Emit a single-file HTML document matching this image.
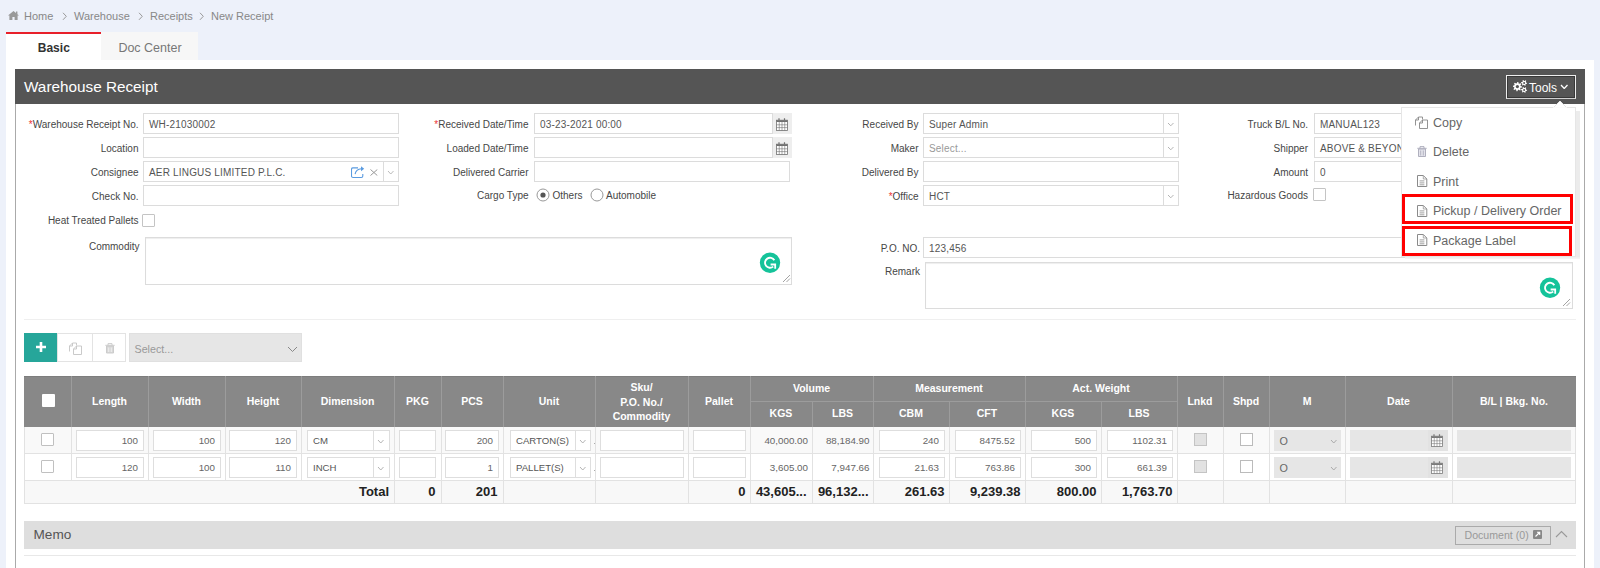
<!DOCTYPE html><html><head><meta charset="utf-8"><style>
html,body{margin:0;padding:0;width:1600px;height:568px;overflow:hidden;background:#edf1fa;font-family:"Liberation Sans", sans-serif;}
div{box-sizing:border-box;}
</style></head><body>
<svg style="position:absolute;left:8px;top:11px;" width="11" height="9" viewBox="0 0 11 9"><path d="M5.5 0 L11 4.6 L9.6 4.6 L9.6 9 L6.6 9 L6.6 6 L4.4 6 L4.4 9 L1.4 9 L1.4 4.6 L0 4.6 Z" fill="#999"/><rect x="8" y="0.5" width="1.4" height="2.5" fill="#999"/></svg>
<div style="position:absolute;left:24px;top:10.69px;font-size:11px;line-height:11px;color:#888;font-weight:400;white-space:nowrap;">Home</div>
<svg style="position:absolute;left:61.5px;top:12px;" width="6" height="9" viewBox="0 0 6 9"><path d="M1 0.8 L4.3 4.3 L1 7.8" fill="none" stroke="#999" stroke-width="1"/></svg>
<svg style="position:absolute;left:137.5px;top:12px;" width="6" height="9" viewBox="0 0 6 9"><path d="M1 0.8 L4.3 4.3 L1 7.8" fill="none" stroke="#999" stroke-width="1"/></svg>
<svg style="position:absolute;left:199px;top:12px;" width="6" height="9" viewBox="0 0 6 9"><path d="M1 0.8 L4.3 4.3 L1 7.8" fill="none" stroke="#999" stroke-width="1"/></svg>
<div style="position:absolute;left:74px;top:10.69px;font-size:11px;line-height:11px;color:#888;font-weight:400;white-space:nowrap;">Warehouse</div>
<div style="position:absolute;left:150px;top:10.69px;font-size:11px;line-height:11px;color:#888;font-weight:400;white-space:nowrap;">Receipts</div>
<div style="position:absolute;left:211px;top:10.69px;font-size:11px;line-height:11px;color:#888;font-weight:400;white-space:nowrap;">New Receipt</div>
<div style="position:absolute;left:6px;top:32px;width:95px;height:28px;background:#fff;border-top:2px solid #e8202a;"></div>
<div style="position:absolute;left:6.299999999999997px;width:95px;text-align:center;top:41.84px;font-size:12px;line-height:12px;color:#333;font-weight:700;white-space:nowrap;">Basic</div>
<div style="position:absolute;left:101px;top:32px;width:97px;height:28px;background:#f7f7f7;"></div>
<div style="position:absolute;left:101.5px;width:97px;text-align:center;top:42.42px;font-size:12.5px;line-height:12.5px;color:#777;font-weight:400;white-space:nowrap;">Doc Center</div>
<div style="position:absolute;left:6px;top:60px;width:1588px;height:508px;background:#fff;"></div>
<div style="position:absolute;left:15px;top:103px;width:1570px;height:465px;border-left:1px solid #aaa;border-right:1px solid #aaa;"></div>
<div style="position:absolute;left:15px;top:69px;width:1570px;height:35px;background:#555;"></div>
<div style="position:absolute;left:24px;top:79.05px;font-size:15.3px;line-height:15.3px;color:#fff;font-weight:400;white-space:nowrap;">Warehouse Receipt</div>
<div style="position:absolute;right:1461.5px;text-align:right;top:120.03px;font-size:10px;line-height:10px;color:#464646;font-weight:400;white-space:nowrap;"><span style="color:#e33">*</span>Warehouse Receipt No.</div>
<div style="position:absolute;left:143px;top:113px;width:256px;height:21px;background:#fff;border:1px solid #dcdcdc;"></div>
<div style="position:absolute;left:149px;top:120.03px;font-size:10px;line-height:10px;color:#555;font-weight:400;white-space:nowrap;letter-spacing:0.18px;">WH-21030002</div>
<div style="position:absolute;right:1461.5px;text-align:right;top:144.03px;font-size:10px;line-height:10px;color:#464646;font-weight:400;white-space:nowrap;">Location</div>
<div style="position:absolute;left:143px;top:137px;width:256px;height:21px;background:#fff;border:1px solid #dcdcdc;"></div>
<div style="position:absolute;right:1461.5px;text-align:right;top:168.03px;font-size:10px;line-height:10px;color:#464646;font-weight:400;white-space:nowrap;">Consignee</div>
<div style="position:absolute;left:143px;top:161px;width:256px;height:21px;background:#fff;border:1px solid #dcdcdc;"></div>
<div style="position:absolute;left:149px;top:168.03px;font-size:10px;line-height:10px;color:#555;font-weight:400;white-space:nowrap;letter-spacing:0.18px;">AER LINGUS LIMITED P.L.C.</div>
<div style="position:absolute;left:383px;top:162px;width:1px;height:19px;background:#dcdcdc;"></div>
<svg style="position:absolute;left:386.7px;top:169.8px;" width="7.5" height="5" viewBox="0 0 7.5 5"><path d="M1 1 L3.75 4 L6.5 1" fill="none" stroke="#bbb" stroke-width="1"/></svg>
<svg style="position:absolute;left:351px;top:165px;" width="14" height="14" viewBox="0 0 14 14"><path d="M7 2.9 H2 Q0.5 2.9 0.5 4.4 V11 Q0.5 12.5 2 12.5 H10.3 Q11.8 12.5 11.8 11 V9" stroke="#5a9be0" stroke-width="1.1" fill="none"/><path d="M4.1 9.2 Q4.8 4.3 10.4 3.7" stroke="#5a9be0" stroke-width="1.1" fill="none"/><path d="M10 1.2 L13.2 3.7 L10 6.2 Z" fill="#5a9be0"/></svg>
<svg style="position:absolute;left:370px;top:168.5px;" width="8" height="7" viewBox="0 0 8 7"><path d="M0.5 0.5 L7.3 6.5 M7.3 0.5 L0.5 6.5" stroke="#999" stroke-width="1"/></svg>
<div style="position:absolute;right:1461.5px;text-align:right;top:192.03px;font-size:10px;line-height:10px;color:#464646;font-weight:400;white-space:nowrap;">Check No.</div>
<div style="position:absolute;left:143px;top:185px;width:256px;height:21px;background:#fff;border:1px solid #dcdcdc;"></div>
<div style="position:absolute;right:1461.5px;text-align:right;top:216.03px;font-size:10px;line-height:10px;color:#464646;font-weight:400;white-space:nowrap;">Heat Treated Pallets</div>
<div style="position:absolute;left:142px;top:213.5px;width:13px;height:13px;background:#fff;border:1px solid #c4c4c4;border-radius:1px;"></div>
<div style="position:absolute;right:1460.5px;text-align:right;top:241.53px;font-size:10px;line-height:10px;color:#464646;font-weight:400;white-space:nowrap;">Commodity</div>
<div style="position:absolute;left:145px;top:237px;width:647px;height:48px;background:#fff;border:1px solid #dcdcdc;box-shadow:inset 0 1px 1px rgba(0,0,0,.07);"></div>
<div style="position:absolute;right:1071.5px;text-align:right;top:120.03px;font-size:10px;line-height:10px;color:#464646;font-weight:400;white-space:nowrap;"><span style="color:#e33">*</span>Received Date/Time</div>
<div style="position:absolute;left:772px;top:113px;width:20px;height:21px;background:#eee;"></div>
<div style="position:absolute;left:534px;top:113px;width:239px;height:21px;background:#fff;border:1px solid #dcdcdc;"></div>
<div style="position:absolute;left:540px;top:120.03px;font-size:10px;line-height:10px;color:#555;font-weight:400;white-space:nowrap;letter-spacing:0.18px;">03-23-2021 00:00</div>
<svg style="position:absolute;left:776px;top:117.5px;" width="12" height="13" viewBox="0 0 12 13"><path d="M3 0.3 V3 M8.5 0.3 V3" stroke="#707070" stroke-width="1.2"/><rect x="0.5" y="2.2" width="11" height="10.3" fill="#fff" stroke="#707070" stroke-width="0.8"/><rect x="0.5" y="2.2" width="11" height="1.8" fill="#707070"/><path d="M0.5 6.8 H11.5 M0.5 9.6 H11.5 M3.25 4 V12.5 M6 4 V12.5 M8.75 4 V12.5" stroke="#707070" stroke-width="0.6"/></svg>
<div style="position:absolute;right:1071.5px;text-align:right;top:144.03px;font-size:10px;line-height:10px;color:#464646;font-weight:400;white-space:nowrap;">Loaded Date/Time</div>
<div style="position:absolute;left:772px;top:137px;width:20px;height:21px;background:#eee;"></div>
<div style="position:absolute;left:534px;top:137px;width:239px;height:21px;background:#fff;border:1px solid #dcdcdc;"></div>
<svg style="position:absolute;left:776px;top:141.5px;" width="12" height="13" viewBox="0 0 12 13"><path d="M3 0.3 V3 M8.5 0.3 V3" stroke="#707070" stroke-width="1.2"/><rect x="0.5" y="2.2" width="11" height="10.3" fill="#fff" stroke="#707070" stroke-width="0.8"/><rect x="0.5" y="2.2" width="11" height="1.8" fill="#707070"/><path d="M0.5 6.8 H11.5 M0.5 9.6 H11.5 M3.25 4 V12.5 M6 4 V12.5 M8.75 4 V12.5" stroke="#707070" stroke-width="0.6"/></svg>
<div style="position:absolute;right:1071.5px;text-align:right;top:168.03px;font-size:10px;line-height:10px;color:#464646;font-weight:400;white-space:nowrap;">Delivered Carrier</div>
<div style="position:absolute;left:534px;top:161px;width:256px;height:21px;background:#fff;border:1px solid #dcdcdc;"></div>
<div style="position:absolute;right:1071.5px;text-align:right;top:190.53px;font-size:10px;line-height:10px;color:#464646;font-weight:400;white-space:nowrap;">Cargo Type</div>
<svg style="position:absolute;left:536px;top:188px;" width="14" height="14" viewBox="0 0 14 14"><circle cx="7" cy="7" r="6" fill="#fff" stroke="#999"/><circle cx="7" cy="7" r="2.6" fill="#555"/></svg>
<div style="position:absolute;left:552.5px;top:190.53px;font-size:10px;line-height:10px;color:#464646;font-weight:400;white-space:nowrap;">Others</div>
<svg style="position:absolute;left:590px;top:188px;" width="14" height="14" viewBox="0 0 14 14"><circle cx="7" cy="7" r="6" fill="#fff" stroke="#999"/></svg>
<div style="position:absolute;left:606px;top:190.53px;font-size:10px;line-height:10px;color:#464646;font-weight:400;white-space:nowrap;">Automobile</div>
<div style="position:absolute;right:681.5px;text-align:right;top:120.03px;font-size:10px;line-height:10px;color:#464646;font-weight:400;white-space:nowrap;">Received By</div>
<div style="position:absolute;left:923px;top:113px;width:256px;height:21px;background:#fff;border:1px solid #dcdcdc;"></div>
<div style="position:absolute;left:929px;top:120.03px;font-size:10px;line-height:10px;color:#555;font-weight:400;white-space:nowrap;letter-spacing:0.18px;">Super Admin</div>
<div style="position:absolute;left:1163px;top:114px;width:1px;height:19px;background:#dcdcdc;"></div>
<svg style="position:absolute;left:1167px;top:121.7px;" width="7.5" height="4.8" viewBox="0 0 7.5 4.8"><path d="M1 1 L3.75 3.8 L6.5 1" fill="none" stroke="#b4b4b4" stroke-width="1"/></svg>
<div style="position:absolute;right:681.5px;text-align:right;top:144.03px;font-size:10px;line-height:10px;color:#464646;font-weight:400;white-space:nowrap;">Maker</div>
<div style="position:absolute;left:923px;top:137px;width:256px;height:21px;background:#fff;border:1px solid #dcdcdc;"></div>
<div style="position:absolute;left:929px;top:144.03px;font-size:10px;line-height:10px;color:#999;font-weight:400;white-space:nowrap;letter-spacing:0.18px;">Select...</div>
<div style="position:absolute;left:1163px;top:138px;width:1px;height:19px;background:#dcdcdc;"></div>
<svg style="position:absolute;left:1167px;top:145.7px;" width="7.5" height="4.8" viewBox="0 0 7.5 4.8"><path d="M1 1 L3.75 3.8 L6.5 1" fill="none" stroke="#b4b4b4" stroke-width="1"/></svg>
<div style="position:absolute;right:681.5px;text-align:right;top:168.03px;font-size:10px;line-height:10px;color:#464646;font-weight:400;white-space:nowrap;">Delivered By</div>
<div style="position:absolute;left:923px;top:161px;width:256px;height:21px;background:#fff;border:1px solid #dcdcdc;"></div>
<div style="position:absolute;right:681.5px;text-align:right;top:192.03px;font-size:10px;line-height:10px;color:#464646;font-weight:400;white-space:nowrap;"><span style="color:#e33">*</span>Office</div>
<div style="position:absolute;left:923px;top:185px;width:256px;height:21px;background:#fff;border:1px solid #dcdcdc;"></div>
<div style="position:absolute;left:929px;top:192.03px;font-size:10px;line-height:10px;color:#555;font-weight:400;white-space:nowrap;letter-spacing:0.18px;">HCT</div>
<div style="position:absolute;left:1163px;top:186px;width:1px;height:19px;background:#dcdcdc;"></div>
<svg style="position:absolute;left:1167px;top:193.7px;" width="7.5" height="4.8" viewBox="0 0 7.5 4.8"><path d="M1 1 L3.75 3.8 L6.5 1" fill="none" stroke="#b4b4b4" stroke-width="1"/></svg>
<div style="position:absolute;right:680px;text-align:right;top:244.23px;font-size:10px;line-height:10px;color:#464646;font-weight:400;white-space:nowrap;">P.O. NO.</div>
<div style="position:absolute;left:923px;top:237px;width:650px;height:21px;background:#fff;border:1px solid #dcdcdc;"></div>
<div style="position:absolute;left:929px;top:244.03px;font-size:10px;line-height:10px;color:#555;font-weight:400;white-space:nowrap;letter-spacing:0.18px;">123,456</div>
<div style="position:absolute;right:680px;text-align:right;top:266.54px;font-size:10px;line-height:10px;color:#464646;font-weight:400;white-space:nowrap;">Remark</div>
<div style="position:absolute;left:925px;top:262px;width:648px;height:47px;background:#fff;border:1px solid #dcdcdc;box-shadow:inset 0 1px 1px rgba(0,0,0,.07);"></div>
<div style="position:absolute;right:292px;text-align:right;top:120.03px;font-size:10px;line-height:10px;color:#464646;font-weight:400;white-space:nowrap;">Truck B/L No.</div>
<div style="position:absolute;left:1314px;top:113px;width:258px;height:21px;background:#fff;border:1px solid #dcdcdc;"></div>
<div style="position:absolute;left:1320px;top:120.03px;font-size:10px;line-height:10px;color:#555;font-weight:400;white-space:nowrap;letter-spacing:0.18px;">MANUAL123</div>
<div style="position:absolute;right:292px;text-align:right;top:144.03px;font-size:10px;line-height:10px;color:#464646;font-weight:400;white-space:nowrap;">Shipper</div>
<div style="position:absolute;left:1314px;top:137px;width:258px;height:21px;background:#fff;border:1px solid #dcdcdc;"></div>
<div style="position:absolute;left:1320px;top:144.03px;font-size:10px;line-height:10px;color:#555;font-weight:400;white-space:nowrap;letter-spacing:0.18px;">ABOVE &amp; BEYOND</div>
<div style="position:absolute;right:292px;text-align:right;top:168.03px;font-size:10px;line-height:10px;color:#464646;font-weight:400;white-space:nowrap;">Amount</div>
<div style="position:absolute;left:1314px;top:161px;width:258px;height:21px;background:#fff;border:1px solid #dcdcdc;"></div>
<div style="position:absolute;left:1320px;top:168.03px;font-size:10px;line-height:10px;color:#555;font-weight:400;white-space:nowrap;letter-spacing:0.18px;">0</div>
<div style="position:absolute;right:292px;text-align:right;top:190.53px;font-size:10px;line-height:10px;color:#464646;font-weight:400;white-space:nowrap;">Hazardous Goods</div>
<div style="position:absolute;left:1313px;top:188px;width:13px;height:13px;background:#fff;border:1px solid #c4c4c4;border-radius:1px;"></div>
<svg style="position:absolute;left:758.5px;top:252px;" width="22" height="22" viewBox="0 0 22 22"><circle cx="11" cy="10.8" r="10.2" fill="#15c39a"/><path d="M15.33 8.3 A5 5 0 1 0 14.21 14.63" fill="none" stroke="#fff" stroke-width="1.9"/><path d="M11.6 12.5 H16.2 V16.8" fill="none" stroke="#fff" stroke-width="1.8"/></svg>
<svg style="position:absolute;left:1539px;top:276.5px;" width="22" height="22" viewBox="0 0 22 22"><circle cx="11" cy="10.8" r="10.2" fill="#15c39a"/><path d="M15.33 8.3 A5 5 0 1 0 14.21 14.63" fill="none" stroke="#fff" stroke-width="1.9"/><path d="M11.6 12.5 H16.2 V16.8" fill="none" stroke="#fff" stroke-width="1.8"/></svg>
<svg style="position:absolute;left:781px;top:273px;" width="10" height="10" viewBox="0 0 10 10"><path d="M9 2 L2 9 M9 5.5 L5.5 9" stroke="#999" stroke-width="0.9"/></svg>
<svg style="position:absolute;left:1561px;top:297px;" width="10" height="10" viewBox="0 0 10 10"><path d="M9 2 L2 9 M9 5.5 L5.5 9" stroke="#999" stroke-width="0.9"/></svg>
<div style="position:absolute;left:24px;top:319px;width:1552px;height:1px;background:#efefef;"></div>
<div style="position:absolute;left:1506px;top:75px;width:70px;height:24px;border:1px solid #eee;border-bottom-color:#d0d0d0;box-shadow:inset 0 0 0 1px #383838;"></div>
<svg style="position:absolute;left:1513px;top:80px;" width="15" height="14" viewBox="0 0 15 14"><polygon points="9.10,6.60 9.01,7.52 7.45,7.86 7.14,8.43 7.72,9.92 7.01,10.51 5.66,9.65 5.04,9.84 4.40,11.30 3.48,11.21 3.14,9.65 2.57,9.34 1.08,9.92 0.49,9.21 1.35,7.86 1.16,7.24 -0.30,6.60 -0.21,5.68 1.35,5.34 1.66,4.77 1.08,3.28 1.79,2.69 3.14,3.55 3.76,3.36 4.40,1.90 5.32,1.99 5.66,3.55 6.23,3.86 7.72,3.28 8.31,3.99 7.45,5.34 7.64,5.96" fill="#fff"/><circle cx="4.4" cy="6.6" r="1.6" fill="#555"/><polygon points="14.10,2.90 14.00,3.68 12.83,3.90 12.51,4.31 12.60,5.50 11.88,5.80 11.10,4.90 10.58,4.83 9.60,5.50 8.98,5.02 9.37,3.90 9.17,3.42 8.10,2.90 8.20,2.12 9.37,1.90 9.69,1.49 9.60,0.30 10.32,0.00 11.10,0.90 11.62,0.97 12.60,0.30 13.22,0.78 12.83,1.90 13.03,2.38" fill="#fff"/><circle cx="11.1" cy="2.9" r="1.0" fill="#555"/><polygon points="14.10,9.90 14.00,10.68 12.83,10.90 12.51,11.31 12.60,12.50 11.88,12.80 11.10,11.90 10.58,11.83 9.60,12.50 8.98,12.02 9.37,10.90 9.17,10.42 8.10,9.90 8.20,9.12 9.37,8.90 9.69,8.49 9.60,7.30 10.32,7.00 11.10,7.90 11.62,7.97 12.60,7.30 13.22,7.78 12.83,8.90 13.03,9.38" fill="#fff"/><circle cx="11.1" cy="9.9" r="1.0" fill="#555"/></svg>
<div style="position:absolute;left:1529px;top:81.84px;font-size:12px;line-height:12px;color:#fff;font-weight:400;white-space:nowrap;">Tools</div>
<svg style="position:absolute;left:1559.5px;top:83.5px;" width="8.5" height="5.5" viewBox="0 0 8.5 5.5"><path d="M1 1 L4.25 4.5 L7.5 1" fill="none" stroke="#fff" stroke-width="1.3"/></svg>
<div style="position:absolute;left:1576px;top:111px;width:4px;height:148px;background:#ececec;"></div>
<div style="position:absolute;left:1405px;top:256px;width:175px;height:3px;background:linear-gradient(#eaeaea,#f6f6f6);"></div>
<div style="position:absolute;left:1401px;top:107px;width:175px;height:150px;background:#fff;border:1px solid #e6e6e6;"></div>
<svg style="position:absolute;left:1553px;top:100px;" width="14" height="8" viewBox="0 0 14 8"><path d="M0 8 L7 1 L14 8 Z" fill="#fff" stroke="#e6e6e6"/><rect x="0" y="7.3" width="14" height="2" fill="#fff"/></svg>
<svg style="position:absolute;left:1415px;top:116px;" width="14" height="13" viewBox="0 0 14 13"><path d="M0.5 9.5 V4 L3.5 1 H7.5 V3.5 M0.5 4 H3.5 V1" fill="none" stroke="#888" stroke-width="0.9"/><path d="M4.5 12.5 V7 L7.5 4 H12.5 V12.5 Z M4.5 7 H7.5 V4" fill="#fff" stroke="#888" stroke-width="0.9"/></svg>
<div style="position:absolute;left:1433px;top:117.42px;font-size:12.5px;line-height:12.5px;color:#666;font-weight:400;white-space:nowrap;">Copy</div>
<svg style="position:absolute;left:1417px;top:146px;" width="10" height="11" viewBox="0 0 10 11"><path d="M0.3 2.3 H9.7 M3 2.3 V0.6 H7 V2.3" fill="none" stroke="#a8a8b8" stroke-width="0.9"/><path d="M1.5 3 H8.5 V10.5 H1.5 Z" fill="#e4e4ec" stroke="#a8a8b8" stroke-width="0.9"/><path d="M3.7 4.5 V9.5 M6.3 4.5 V9.5" stroke="#a8a8b8" stroke-width="0.8"/></svg>
<div style="position:absolute;left:1433px;top:146.42px;font-size:12.5px;line-height:12.5px;color:#666;font-weight:400;white-space:nowrap;">Delete</div>
<svg style="position:absolute;left:1416.7px;top:175px;" width="11" height="13" viewBox="0 0 11 13"><path d="M0.5 0.5 H6.3 L9.8 4 V11.5 H0.5 Z" fill="none" stroke="#8a8a8a" stroke-width="1"/><path d="M6.3 0.5 V4 H9.8" fill="none" stroke="#999" stroke-width="0.8"/><path d="M2.6 5.9 H7.4 M2.6 7.9 H7.4 M2.6 9.8 H7.4" stroke="#888" stroke-width="0.8"/></svg>
<div style="position:absolute;left:1433px;top:176.42px;font-size:12.5px;line-height:12.5px;color:#666;font-weight:400;white-space:nowrap;">Print</div>
<svg style="position:absolute;left:1416.7px;top:205px;" width="11" height="13" viewBox="0 0 11 13"><path d="M0.5 0.5 H6.3 L9.8 4 V11.5 H0.5 Z" fill="none" stroke="#8a8a8a" stroke-width="1"/><path d="M6.3 0.5 V4 H9.8" fill="none" stroke="#999" stroke-width="0.8"/><path d="M2.6 5.9 H7.4 M2.6 7.9 H7.4 M2.6 9.8 H7.4" stroke="#888" stroke-width="0.8"/></svg>
<div style="position:absolute;left:1433px;top:205.42px;font-size:12.5px;line-height:12.5px;color:#666;font-weight:400;white-space:nowrap;">Pickup / Delivery Order</div>
<svg style="position:absolute;left:1416.7px;top:234px;" width="11" height="13" viewBox="0 0 11 13"><path d="M0.5 0.5 H6.3 L9.8 4 V11.5 H0.5 Z" fill="none" stroke="#8a8a8a" stroke-width="1"/><path d="M6.3 0.5 V4 H9.8" fill="none" stroke="#999" stroke-width="0.8"/><path d="M2.6 5.9 H7.4 M2.6 7.9 H7.4 M2.6 9.8 H7.4" stroke="#888" stroke-width="0.8"/></svg>
<div style="position:absolute;left:1433px;top:234.92px;font-size:12.5px;line-height:12.5px;color:#666;font-weight:400;white-space:nowrap;">Package Label</div>
<div style="position:absolute;left:1402px;top:194px;width:171px;height:30px;border:3px solid #ff0000;"></div>
<div style="position:absolute;left:1402px;top:226px;width:170px;height:30px;border:3px solid #ff0000;"></div>
<div style="position:absolute;left:24px;top:333px;width:34px;height:29px;background:#26a69a;"></div>
<svg style="position:absolute;left:35px;top:341px;" width="12" height="12" viewBox="0 0 12 12"><path d="M6 1 V11 M1 6 H11" stroke="#fff" stroke-width="2.6"/></svg>
<div style="position:absolute;left:57px;top:333px;width:36px;height:29px;background:#fff;border:1px solid #e3e3e3;"></div>
<div style="position:absolute;left:92px;top:333px;width:34px;height:29px;background:#fff;border:1px solid #e3e3e3;"></div>
<svg style="position:absolute;left:68.5px;top:341.5px;" width="14" height="13" viewBox="0 0 14 13"><path d="M0.5 9.5 V4 L3.5 1 H7.5 V3.5 M0.5 4 H3.5 V1" fill="none" stroke="#c4c4c4" stroke-width="0.9"/><path d="M4.5 12.5 V7 L7.5 4 H12.5 V12.5 Z M4.5 7 H7.5 V4" fill="#fff" stroke="#c4c4c4" stroke-width="0.9"/></svg>
<svg style="position:absolute;left:104.5px;top:342.5px;" width="10" height="11" viewBox="0 0 10 11"><path d="M0.3 2.3 H9.7 M3 2.3 V0.6 H7 V2.3" fill="none" stroke="#c8c8c8" stroke-width="0.9"/><path d="M1.5 3 H8.5 V10 H1.5 Z" fill="#d8d8d8" stroke="#c8c8c8" stroke-width="0.9"/><path d="M3.7 4.5 V9 M6.3 4.5 V9" stroke="#f4f4f4" stroke-width="0.8"/></svg>
<div style="position:absolute;left:129px;top:333px;width:173px;height:29px;background:#e6e6e6;border:1px solid #e0e0e0;"></div>
<div style="position:absolute;left:134.5px;top:343.94px;font-size:10.7px;line-height:10.7px;color:#999;font-weight:400;white-space:nowrap;">Select...</div>
<svg style="position:absolute;left:287px;top:346px;" width="11" height="6.5" viewBox="0 0 11 6.5"><path d="M1 1 L5.5 5.5 L10 1" fill="none" stroke="#888" stroke-width="1"/></svg>
<div style="position:absolute;left:24px;top:376px;width:1552px;height:51px;background:#888888;border-top:1px solid #7d7d7d;"></div>
<div style="position:absolute;left:24px;top:427px;width:1552px;height:26px;background:#f9f9f9;"></div>
<div style="position:absolute;left:24px;top:453px;width:1552px;height:27px;background:#fff;"></div>
<div style="position:absolute;left:24px;top:480px;width:1552px;height:23px;background:#f8f8f8;"></div>
<div style="position:absolute;left:24px;top:427px;width:1552px;height:77px;border:1px solid #e2e2e2;border-top:none;"></div>
<div style="position:absolute;left:24px;top:453px;width:1552px;height:1px;background:#e2e2e2;"></div>
<div style="position:absolute;left:24px;top:480px;width:1552px;height:1px;background:#e2e2e2;"></div>
<div style="position:absolute;left:71px;top:376px;width:1px;height:51px;background:#9c9c9c;"></div>
<div style="position:absolute;left:71px;top:427px;width:1px;height:53px;background:#e2e2e2;"></div>
<div style="position:absolute;left:148px;top:376px;width:1px;height:51px;background:#9c9c9c;"></div>
<div style="position:absolute;left:148px;top:427px;width:1px;height:53px;background:#e2e2e2;"></div>
<div style="position:absolute;left:225px;top:376px;width:1px;height:51px;background:#9c9c9c;"></div>
<div style="position:absolute;left:225px;top:427px;width:1px;height:53px;background:#e2e2e2;"></div>
<div style="position:absolute;left:301px;top:376px;width:1px;height:51px;background:#9c9c9c;"></div>
<div style="position:absolute;left:301px;top:427px;width:1px;height:53px;background:#e2e2e2;"></div>
<div style="position:absolute;left:394px;top:376px;width:1px;height:51px;background:#9c9c9c;"></div>
<div style="position:absolute;left:394px;top:427px;width:1px;height:76px;background:#e2e2e2;"></div>
<div style="position:absolute;left:441px;top:376px;width:1px;height:51px;background:#9c9c9c;"></div>
<div style="position:absolute;left:441px;top:427px;width:1px;height:76px;background:#e2e2e2;"></div>
<div style="position:absolute;left:503px;top:376px;width:1px;height:51px;background:#9c9c9c;"></div>
<div style="position:absolute;left:503px;top:427px;width:1px;height:76px;background:#e2e2e2;"></div>
<div style="position:absolute;left:595px;top:376px;width:1px;height:51px;background:#9c9c9c;"></div>
<div style="position:absolute;left:595px;top:427px;width:1px;height:76px;background:#e2e2e2;"></div>
<div style="position:absolute;left:688px;top:376px;width:1px;height:51px;background:#9c9c9c;"></div>
<div style="position:absolute;left:688px;top:427px;width:1px;height:76px;background:#e2e2e2;"></div>
<div style="position:absolute;left:750px;top:376px;width:1px;height:51px;background:#9c9c9c;"></div>
<div style="position:absolute;left:750px;top:427px;width:1px;height:76px;background:#e2e2e2;"></div>
<div style="position:absolute;left:812px;top:401px;width:1px;height:26px;background:#9c9c9c;"></div>
<div style="position:absolute;left:812px;top:427px;width:1px;height:76px;background:#e2e2e2;"></div>
<div style="position:absolute;left:873px;top:376px;width:1px;height:51px;background:#9c9c9c;"></div>
<div style="position:absolute;left:873px;top:427px;width:1px;height:76px;background:#e2e2e2;"></div>
<div style="position:absolute;left:949px;top:401px;width:1px;height:26px;background:#9c9c9c;"></div>
<div style="position:absolute;left:949px;top:427px;width:1px;height:76px;background:#e2e2e2;"></div>
<div style="position:absolute;left:1025px;top:376px;width:1px;height:51px;background:#9c9c9c;"></div>
<div style="position:absolute;left:1025px;top:427px;width:1px;height:76px;background:#e2e2e2;"></div>
<div style="position:absolute;left:1101px;top:401px;width:1px;height:26px;background:#9c9c9c;"></div>
<div style="position:absolute;left:1101px;top:427px;width:1px;height:76px;background:#e2e2e2;"></div>
<div style="position:absolute;left:1177px;top:376px;width:1px;height:51px;background:#9c9c9c;"></div>
<div style="position:absolute;left:1177px;top:427px;width:1px;height:76px;background:#e2e2e2;"></div>
<div style="position:absolute;left:1223px;top:376px;width:1px;height:51px;background:#9c9c9c;"></div>
<div style="position:absolute;left:1223px;top:427px;width:1px;height:76px;background:#e2e2e2;"></div>
<div style="position:absolute;left:1269px;top:376px;width:1px;height:51px;background:#9c9c9c;"></div>
<div style="position:absolute;left:1269px;top:427px;width:1px;height:76px;background:#e2e2e2;"></div>
<div style="position:absolute;left:1345px;top:376px;width:1px;height:51px;background:#9c9c9c;"></div>
<div style="position:absolute;left:1345px;top:427px;width:1px;height:76px;background:#e2e2e2;"></div>
<div style="position:absolute;left:1452px;top:376px;width:1px;height:51px;background:#9c9c9c;"></div>
<div style="position:absolute;left:1452px;top:427px;width:1px;height:76px;background:#e2e2e2;"></div>
<div style="position:absolute;left:750px;top:401px;width:428px;height:1px;background:#9c9c9c;"></div>
<div style="position:absolute;left:41.6px;top:394px;width:13px;height:12.5px;background:#fff;border-radius:1px;"></div>
<div style="position:absolute;left:71.0px;width:77px;text-align:center;top:396.11px;font-size:10.5px;line-height:10.5px;color:#fff;font-weight:700;white-space:nowrap;">Length</div>
<div style="position:absolute;left:148.0px;width:77px;text-align:center;top:396.11px;font-size:10.5px;line-height:10.5px;color:#fff;font-weight:700;white-space:nowrap;">Width</div>
<div style="position:absolute;left:225.0px;width:76px;text-align:center;top:396.11px;font-size:10.5px;line-height:10.5px;color:#fff;font-weight:700;white-space:nowrap;">Height</div>
<div style="position:absolute;left:301.0px;width:93px;text-align:center;top:396.11px;font-size:10.5px;line-height:10.5px;color:#fff;font-weight:700;white-space:nowrap;">Dimension</div>
<div style="position:absolute;left:394.0px;width:47px;text-align:center;top:396.11px;font-size:10.5px;line-height:10.5px;color:#fff;font-weight:700;white-space:nowrap;">PKG</div>
<div style="position:absolute;left:441.0px;width:62px;text-align:center;top:396.11px;font-size:10.5px;line-height:10.5px;color:#fff;font-weight:700;white-space:nowrap;">PCS</div>
<div style="position:absolute;left:503.0px;width:92px;text-align:center;top:396.11px;font-size:10.5px;line-height:10.5px;color:#fff;font-weight:700;white-space:nowrap;">Unit</div>
<div style="position:absolute;left:688.0px;width:62px;text-align:center;top:396.11px;font-size:10.5px;line-height:10.5px;color:#fff;font-weight:700;white-space:nowrap;">Pallet</div>
<div style="position:absolute;left:1177.0px;width:46px;text-align:center;top:396.11px;font-size:10.5px;line-height:10.5px;color:#fff;font-weight:700;white-space:nowrap;">Lnkd</div>
<div style="position:absolute;left:1223.0px;width:46px;text-align:center;top:396.11px;font-size:10.5px;line-height:10.5px;color:#fff;font-weight:700;white-space:nowrap;">Shpd</div>
<div style="position:absolute;left:1269.0px;width:76px;text-align:center;top:396.11px;font-size:10.5px;line-height:10.5px;color:#fff;font-weight:700;white-space:nowrap;">M</div>
<div style="position:absolute;left:1345.0px;width:107px;text-align:center;top:396.11px;font-size:10.5px;line-height:10.5px;color:#fff;font-weight:700;white-space:nowrap;">Date</div>
<div style="position:absolute;left:1452.0px;width:124px;text-align:center;top:396.11px;font-size:10.5px;line-height:10.5px;color:#fff;font-weight:700;white-space:nowrap;">B/L | Bkg. No.</div>
<div style="position:absolute;left:595.0px;width:93px;text-align:center;top:382.11px;font-size:10.5px;line-height:10.5px;color:#fff;font-weight:700;white-space:nowrap;">Sku/</div>
<div style="position:absolute;left:595.0px;width:93px;text-align:center;top:396.61px;font-size:10.5px;line-height:10.5px;color:#fff;font-weight:700;white-space:nowrap;">P.O. No./</div>
<div style="position:absolute;left:595.0px;width:93px;text-align:center;top:411.11px;font-size:10.5px;line-height:10.5px;color:#fff;font-weight:700;white-space:nowrap;">Commodity</div>
<div style="position:absolute;left:750.0px;width:123px;text-align:center;top:383.11px;font-size:10.5px;line-height:10.5px;color:#fff;font-weight:700;white-space:nowrap;">Volume</div>
<div style="position:absolute;left:873.0px;width:152px;text-align:center;top:383.11px;font-size:10.5px;line-height:10.5px;color:#fff;font-weight:700;white-space:nowrap;">Measurement</div>
<div style="position:absolute;left:1025.0px;width:152px;text-align:center;top:383.11px;font-size:10.5px;line-height:10.5px;color:#fff;font-weight:700;white-space:nowrap;">Act. Weight</div>
<div style="position:absolute;left:750.0px;width:62px;text-align:center;top:407.61px;font-size:10.5px;line-height:10.5px;color:#fff;font-weight:700;white-space:nowrap;">KGS</div>
<div style="position:absolute;left:812.0px;width:61px;text-align:center;top:407.61px;font-size:10.5px;line-height:10.5px;color:#fff;font-weight:700;white-space:nowrap;">LBS</div>
<div style="position:absolute;left:873.0px;width:76px;text-align:center;top:407.61px;font-size:10.5px;line-height:10.5px;color:#fff;font-weight:700;white-space:nowrap;">CBM</div>
<div style="position:absolute;left:949.0px;width:76px;text-align:center;top:407.61px;font-size:10.5px;line-height:10.5px;color:#fff;font-weight:700;white-space:nowrap;">CFT</div>
<div style="position:absolute;left:1025.0px;width:76px;text-align:center;top:407.61px;font-size:10.5px;line-height:10.5px;color:#fff;font-weight:700;white-space:nowrap;">KGS</div>
<div style="position:absolute;left:1101.0px;width:76px;text-align:center;top:407.61px;font-size:10.5px;line-height:10.5px;color:#fff;font-weight:700;white-space:nowrap;">LBS</div>
<div style="position:absolute;left:40.6px;top:433px;width:13px;height:12.6px;background:#fff;border:1px solid #c0c0c0;border-radius:1px;"></div>
<div style="position:absolute;left:76px;top:430px;width:68px;height:21px;background:#fff;border:1px solid #dedede;"></div>
<div style="position:absolute;right:1462px;text-align:right;top:435.50px;font-size:9.8px;line-height:9.8px;color:#666;font-weight:400;white-space:nowrap;">100</div>
<div style="position:absolute;left:153px;top:430px;width:68px;height:21px;background:#fff;border:1px solid #dedede;"></div>
<div style="position:absolute;right:1385px;text-align:right;top:435.50px;font-size:9.8px;line-height:9.8px;color:#666;font-weight:400;white-space:nowrap;">100</div>
<div style="position:absolute;left:229px;top:430px;width:68px;height:21px;background:#fff;border:1px solid #dedede;"></div>
<div style="position:absolute;right:1309px;text-align:right;top:435.50px;font-size:9.8px;line-height:9.8px;color:#666;font-weight:400;white-space:nowrap;">120</div>
<div style="position:absolute;left:307px;top:430px;width:83px;height:21px;background:#fff;border:1px solid #dedede;"></div>
<div style="position:absolute;left:373px;top:431px;width:1px;height:19px;background:#dedede;"></div>
<div style="position:absolute;left:313px;top:435.67px;font-size:9.6px;line-height:9.6px;color:#555;font-weight:400;white-space:nowrap;">CM</div>
<svg style="position:absolute;left:376.8px;top:439.2px;" width="7.5" height="5" viewBox="0 0 7.5 5"><path d="M1 1 L3.75 4 L6.5 1" fill="none" stroke="#b4b4b4" stroke-width="1"/></svg>
<div style="position:absolute;left:399px;top:430px;width:37px;height:21px;background:#fff;border:1px solid #dedede;"></div>
<div style="position:absolute;left:445px;top:430px;width:54px;height:21px;background:#fff;border:1px solid #dedede;"></div>
<div style="position:absolute;right:1107px;text-align:right;top:435.50px;font-size:9.8px;line-height:9.8px;color:#666;font-weight:400;white-space:nowrap;">200</div>
<div style="position:absolute;left:510px;top:430px;width:81px;height:21px;background:#fff;border:1px solid #dedede;"></div>
<div style="position:absolute;left:575px;top:431px;width:1px;height:19px;background:#dedede;"></div>
<div style="position:absolute;left:516px;top:435.67px;font-size:9.6px;line-height:9.6px;color:#555;font-weight:400;white-space:nowrap;">CARTON(S)</div>
<svg style="position:absolute;left:578.8px;top:439.2px;" width="7.5" height="5" viewBox="0 0 7.5 5"><path d="M1 1 L3.75 4 L6.5 1" fill="none" stroke="#b4b4b4" stroke-width="1"/></svg>
<div style="position:absolute;left:594px;top:442.5px;width:1px;height:1px;background:#aaa;"></div>
<div style="position:absolute;left:600px;top:430px;width:84px;height:21px;background:#fff;border:1px solid #dedede;"></div>
<div style="position:absolute;left:693px;top:430px;width:53px;height:21px;background:#fff;border:1px solid #dedede;"></div>
<div style="position:absolute;right:792px;text-align:right;top:435.50px;font-size:9.8px;line-height:9.8px;color:#666;font-weight:400;white-space:nowrap;">40,000.00</div>
<div style="position:absolute;right:730.5px;text-align:right;top:435.50px;font-size:9.8px;line-height:9.8px;color:#666;font-weight:400;white-space:nowrap;">88,184.90</div>
<div style="position:absolute;left:879px;top:430px;width:66px;height:21px;background:#fff;border:1px solid #dedede;"></div>
<div style="position:absolute;right:661px;text-align:right;top:435.50px;font-size:9.8px;line-height:9.8px;color:#666;font-weight:400;white-space:nowrap;">240</div>
<div style="position:absolute;left:955px;top:430px;width:66px;height:21px;background:#fff;border:1px solid #dedede;"></div>
<div style="position:absolute;right:585px;text-align:right;top:435.50px;font-size:9.8px;line-height:9.8px;color:#666;font-weight:400;white-space:nowrap;">8475.52</div>
<div style="position:absolute;left:1031px;top:430px;width:66px;height:21px;background:#fff;border:1px solid #dedede;"></div>
<div style="position:absolute;right:509px;text-align:right;top:435.50px;font-size:9.8px;line-height:9.8px;color:#666;font-weight:400;white-space:nowrap;">500</div>
<div style="position:absolute;left:1107px;top:430px;width:66px;height:21px;background:#fff;border:1px solid #dedede;"></div>
<div style="position:absolute;right:433px;text-align:right;top:435.50px;font-size:9.8px;line-height:9.8px;color:#666;font-weight:400;white-space:nowrap;">1102.31</div>
<div style="position:absolute;left:1194px;top:433px;width:13px;height:13px;background:#e2e2e2;border:1px solid #c4c4c4;"></div>
<div style="position:absolute;left:1240px;top:433px;width:13px;height:13px;background:#fff;border:1px solid #bbb;"></div>
<div style="position:absolute;left:1274px;top:430px;width:67px;height:21px;background:#e6e6e6;"></div>
<div style="position:absolute;left:1279.5px;top:436.46px;font-size:10.8px;line-height:10.8px;color:#666;font-weight:400;white-space:nowrap;">O</div>
<svg style="position:absolute;left:1329.5px;top:439.2px;" width="7.5" height="5" viewBox="0 0 7.5 5"><path d="M1 1 L3.75 4 L6.5 1" fill="none" stroke="#aaa" stroke-width="1"/></svg>
<div style="position:absolute;left:1350px;top:430px;width:98px;height:21px;background:#e6e6e6;"></div>
<div style="position:absolute;left:1428px;top:430px;width:20px;height:21px;background:#e2e2e2;"></div>
<svg style="position:absolute;left:1430.5px;top:433.5px;" width="12" height="13" viewBox="0 0 12 13"><path d="M3 0.3 V3 M8.5 0.3 V3" stroke="#7a7a7a" stroke-width="1.2"/><rect x="0.5" y="2.2" width="11" height="10.3" fill="#fff" stroke="#7a7a7a" stroke-width="0.8"/><rect x="0.5" y="2.2" width="11" height="1.8" fill="#7a7a7a"/><path d="M0.5 6.8 H11.5 M0.5 9.6 H11.5 M3.25 4 V12.5 M6 4 V12.5 M8.75 4 V12.5" stroke="#7a7a7a" stroke-width="0.6"/></svg>
<div style="position:absolute;left:1457px;top:430px;width:114px;height:21px;background:#e6e6e6;"></div>
<div style="position:absolute;left:40.6px;top:460px;width:13px;height:12.6px;background:#fff;border:1px solid #c0c0c0;border-radius:1px;"></div>
<div style="position:absolute;left:76px;top:457px;width:68px;height:21px;background:#fff;border:1px solid #dedede;"></div>
<div style="position:absolute;right:1462px;text-align:right;top:462.50px;font-size:9.8px;line-height:9.8px;color:#666;font-weight:400;white-space:nowrap;">120</div>
<div style="position:absolute;left:153px;top:457px;width:68px;height:21px;background:#fff;border:1px solid #dedede;"></div>
<div style="position:absolute;right:1385px;text-align:right;top:462.50px;font-size:9.8px;line-height:9.8px;color:#666;font-weight:400;white-space:nowrap;">100</div>
<div style="position:absolute;left:229px;top:457px;width:68px;height:21px;background:#fff;border:1px solid #dedede;"></div>
<div style="position:absolute;right:1309px;text-align:right;top:462.50px;font-size:9.8px;line-height:9.8px;color:#666;font-weight:400;white-space:nowrap;">110</div>
<div style="position:absolute;left:307px;top:457px;width:83px;height:21px;background:#fff;border:1px solid #dedede;"></div>
<div style="position:absolute;left:373px;top:458px;width:1px;height:19px;background:#dedede;"></div>
<div style="position:absolute;left:313px;top:462.67px;font-size:9.6px;line-height:9.6px;color:#555;font-weight:400;white-space:nowrap;">INCH</div>
<svg style="position:absolute;left:376.8px;top:466.2px;" width="7.5" height="5" viewBox="0 0 7.5 5"><path d="M1 1 L3.75 4 L6.5 1" fill="none" stroke="#b4b4b4" stroke-width="1"/></svg>
<div style="position:absolute;left:399px;top:457px;width:37px;height:21px;background:#fff;border:1px solid #dedede;"></div>
<div style="position:absolute;left:445px;top:457px;width:54px;height:21px;background:#fff;border:1px solid #dedede;"></div>
<div style="position:absolute;right:1107px;text-align:right;top:462.50px;font-size:9.8px;line-height:9.8px;color:#666;font-weight:400;white-space:nowrap;">1</div>
<div style="position:absolute;left:510px;top:457px;width:81px;height:21px;background:#fff;border:1px solid #dedede;"></div>
<div style="position:absolute;left:575px;top:458px;width:1px;height:19px;background:#dedede;"></div>
<div style="position:absolute;left:516px;top:462.67px;font-size:9.6px;line-height:9.6px;color:#555;font-weight:400;white-space:nowrap;">PALLET(S)</div>
<svg style="position:absolute;left:578.8px;top:466.2px;" width="7.5" height="5" viewBox="0 0 7.5 5"><path d="M1 1 L3.75 4 L6.5 1" fill="none" stroke="#b4b4b4" stroke-width="1"/></svg>
<div style="position:absolute;left:594px;top:469.5px;width:1px;height:1px;background:#aaa;"></div>
<div style="position:absolute;left:600px;top:457px;width:84px;height:21px;background:#fff;border:1px solid #dedede;"></div>
<div style="position:absolute;left:693px;top:457px;width:53px;height:21px;background:#fff;border:1px solid #dedede;"></div>
<div style="position:absolute;right:792px;text-align:right;top:462.50px;font-size:9.8px;line-height:9.8px;color:#666;font-weight:400;white-space:nowrap;">3,605.00</div>
<div style="position:absolute;right:730.5px;text-align:right;top:462.50px;font-size:9.8px;line-height:9.8px;color:#666;font-weight:400;white-space:nowrap;">7,947.66</div>
<div style="position:absolute;left:879px;top:457px;width:66px;height:21px;background:#fff;border:1px solid #dedede;"></div>
<div style="position:absolute;right:661px;text-align:right;top:462.50px;font-size:9.8px;line-height:9.8px;color:#666;font-weight:400;white-space:nowrap;">21.63</div>
<div style="position:absolute;left:955px;top:457px;width:66px;height:21px;background:#fff;border:1px solid #dedede;"></div>
<div style="position:absolute;right:585px;text-align:right;top:462.50px;font-size:9.8px;line-height:9.8px;color:#666;font-weight:400;white-space:nowrap;">763.86</div>
<div style="position:absolute;left:1031px;top:457px;width:66px;height:21px;background:#fff;border:1px solid #dedede;"></div>
<div style="position:absolute;right:509px;text-align:right;top:462.50px;font-size:9.8px;line-height:9.8px;color:#666;font-weight:400;white-space:nowrap;">300</div>
<div style="position:absolute;left:1107px;top:457px;width:66px;height:21px;background:#fff;border:1px solid #dedede;"></div>
<div style="position:absolute;right:433px;text-align:right;top:462.50px;font-size:9.8px;line-height:9.8px;color:#666;font-weight:400;white-space:nowrap;">661.39</div>
<div style="position:absolute;left:1194px;top:460px;width:13px;height:13px;background:#e2e2e2;border:1px solid #c4c4c4;"></div>
<div style="position:absolute;left:1240px;top:460px;width:13px;height:13px;background:#fff;border:1px solid #bbb;"></div>
<div style="position:absolute;left:1274px;top:457px;width:67px;height:21px;background:#e6e6e6;"></div>
<div style="position:absolute;left:1279.5px;top:463.46px;font-size:10.8px;line-height:10.8px;color:#666;font-weight:400;white-space:nowrap;">O</div>
<svg style="position:absolute;left:1329.5px;top:466.2px;" width="7.5" height="5" viewBox="0 0 7.5 5"><path d="M1 1 L3.75 4 L6.5 1" fill="none" stroke="#aaa" stroke-width="1"/></svg>
<div style="position:absolute;left:1350px;top:457px;width:98px;height:21px;background:#e6e6e6;"></div>
<div style="position:absolute;left:1428px;top:457px;width:20px;height:21px;background:#e2e2e2;"></div>
<svg style="position:absolute;left:1430.5px;top:460.5px;" width="12" height="13" viewBox="0 0 12 13"><path d="M3 0.3 V3 M8.5 0.3 V3" stroke="#7a7a7a" stroke-width="1.2"/><rect x="0.5" y="2.2" width="11" height="10.3" fill="#fff" stroke="#7a7a7a" stroke-width="0.8"/><rect x="0.5" y="2.2" width="11" height="1.8" fill="#7a7a7a"/><path d="M0.5 6.8 H11.5 M0.5 9.6 H11.5 M3.25 4 V12.5 M6 4 V12.5 M8.75 4 V12.5" stroke="#7a7a7a" stroke-width="0.6"/></svg>
<div style="position:absolute;left:1457px;top:457px;width:114px;height:21px;background:#e6e6e6;"></div>
<div style="position:absolute;right:1211px;text-align:right;top:485.20px;font-size:13px;line-height:13px;color:#222;font-weight:700;white-space:nowrap;">Total</div>
<div style="position:absolute;right:1164.5px;text-align:right;top:485.20px;font-size:13px;line-height:13px;color:#222;font-weight:700;white-space:nowrap;">0</div>
<div style="position:absolute;right:1102.5px;text-align:right;top:485.20px;font-size:13px;line-height:13px;color:#222;font-weight:700;white-space:nowrap;">201</div>
<div style="position:absolute;right:854.5px;text-align:right;top:485.20px;font-size:13px;line-height:13px;color:#222;font-weight:700;white-space:nowrap;">0</div>
<div style="position:absolute;right:793.5px;text-align:right;top:485.20px;font-size:13px;line-height:13px;color:#222;font-weight:700;white-space:nowrap;">43,605...</div>
<div style="position:absolute;right:731.5px;text-align:right;top:485.20px;font-size:13px;line-height:13px;color:#222;font-weight:700;white-space:nowrap;">96,132...</div>
<div style="position:absolute;right:655.5px;text-align:right;top:485.20px;font-size:13px;line-height:13px;color:#222;font-weight:700;white-space:nowrap;">261.63</div>
<div style="position:absolute;right:579.5px;text-align:right;top:485.20px;font-size:13px;line-height:13px;color:#222;font-weight:700;white-space:nowrap;">9,239.38</div>
<div style="position:absolute;right:503.5px;text-align:right;top:485.20px;font-size:13px;line-height:13px;color:#222;font-weight:700;white-space:nowrap;">800.00</div>
<div style="position:absolute;right:427.5px;text-align:right;top:485.20px;font-size:13px;line-height:13px;color:#222;font-weight:700;white-space:nowrap;">1,763.70</div>
<div style="position:absolute;left:24px;top:521px;width:1552px;height:28px;background:#dedede;"></div>
<div style="position:absolute;left:33.5px;top:528.49px;font-size:13.6px;line-height:13.6px;color:#555;font-weight:400;white-space:nowrap;">Memo</div>
<div style="position:absolute;left:1455px;top:526px;width:96px;height:19px;border:1px solid #aaa;"></div>
<div style="position:absolute;left:1464.5px;top:530.33px;font-size:10.6px;line-height:10.6px;color:#999;font-weight:400;white-space:nowrap;">Document (0)</div>
<svg style="position:absolute;left:1533px;top:530px;" width="9" height="9" viewBox="0 0 9 9"><rect x="0" y="0" width="9" height="9" rx="1" fill="#888"/><path d="M2.5 6.5 L6.5 2.5 M4 2.3 H6.7 V5" stroke="#fff" stroke-width="1.1" fill="none"/></svg>
<svg style="position:absolute;left:1555px;top:530px;" width="13" height="8" viewBox="0 0 13 8"><path d="M1 7 L6.5 1.5 L12 7" fill="none" stroke="#999" stroke-width="1.1"/></svg>
<div style="position:absolute;left:24px;top:555px;width:1552px;height:1px;background:#e8e8e8;"></div>
</body></html>
